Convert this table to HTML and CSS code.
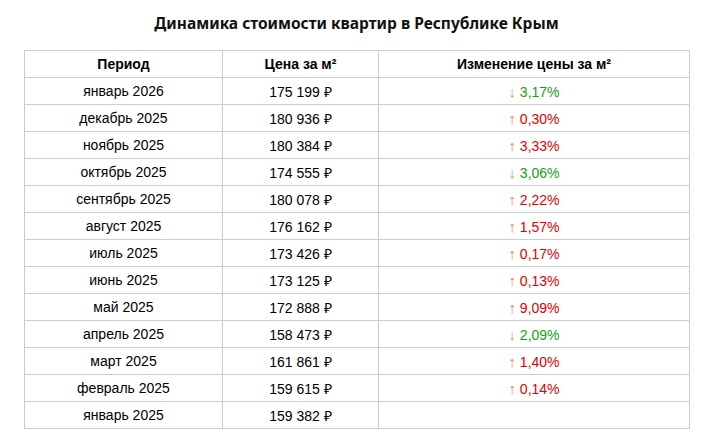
FILE: index.html
```html
<!DOCTYPE html>
<html lang="ru">
<head>
<meta charset="utf-8">
<link rel="stylesheet" href="styles.css">
</head>
<body>
<div class="wrap">
  <h1 class="title">Динамика стоимости квартир в Республике Крым</h1>
  <table class="tbl">
    <colgroup><col class="c1"><col class="c2"><col class="c3"></colgroup>
    <thead>
      <tr><th>Период</th><th>Цена за м²</th><th>Изменение цены за м²</th></tr>
    </thead>
    <tbody>
      <tr><td>январь 2026</td><td>175 199 ₽</td><td class="dn"><span class="arr">↓</span> 3,17%</td></tr>
      <tr><td>декабрь 2025</td><td>180 936 ₽</td><td class="up"><span class="arr">↑</span> 0,30%</td></tr>
      <tr><td>ноябрь 2025</td><td>180 384 ₽</td><td class="up"><span class="arr">↑</span> 3,33%</td></tr>
      <tr><td>октябрь 2025</td><td>174 555 ₽</td><td class="dn"><span class="arr">↓</span> 3,06%</td></tr>
      <tr><td>сентябрь 2025</td><td>180 078 ₽</td><td class="up"><span class="arr">↑</span> 2,22%</td></tr>
      <tr><td>август 2025</td><td>176 162 ₽</td><td class="up"><span class="arr">↑</span> 1,57%</td></tr>
      <tr><td>июль 2025</td><td>173 426 ₽</td><td class="up"><span class="arr">↑</span> 0,17%</td></tr>
      <tr><td>июнь 2025</td><td>173 125 ₽</td><td class="up"><span class="arr">↑</span> 0,13%</td></tr>
      <tr><td>май 2025</td><td>172 888 ₽</td><td class="up"><span class="arr">↑</span> 9,09%</td></tr>
      <tr><td>апрель 2025</td><td>158 473 ₽</td><td class="dn"><span class="arr">↓</span> 2,09%</td></tr>
      <tr><td>март 2025</td><td>161 861 ₽</td><td class="up"><span class="arr">↑</span> 1,40%</td></tr>
      <tr><td>февраль 2025</td><td>159 615 ₽</td><td class="up"><span class="arr">↑</span> 0,14%</td></tr>
      <tr><td>январь 2025</td><td>159 382 ₽</td><td></td></tr>
    </tbody>
  </table>
</div>
</body>
</html>
```
FILE: styles.css
```css
html, body { margin: 0; padding: 0; background: #fff; }
body { font-family: "Liberation Sans", Arial, sans-serif; color: #000; }
.wrap { padding: 12px 0 0 24px; width: 665px; }
.title {
  margin: 0 0 15px 0;
  text-align: center;
  font-family: "Noto Sans", "Open Sans", sans-serif;
  font-weight: 700;
  font-size: 15.5px;
  line-height: 23px;
  color: #111;
}
.tbl { border-collapse: collapse; width: 665px; table-layout: fixed; font-size: 14px; }
.c1 { width: 198px; }
.c2 { width: 156px; }
.c3 { width: 311px; }
.tbl th, .tbl td {
  border: 1px solid #cccccc;
  height: 26px;
  padding: 0;
  text-align: center;
  vertical-align: middle;
}
.tbl th { font-weight: 700; }
.arr { font-size: 15px; }
.tbl td.dn { color: #17a017; }
.tbl td.up { color: #e00000; }
.dn .arr { color: #9cc20e; }
.up .arr { color: #f0883c; }
```
